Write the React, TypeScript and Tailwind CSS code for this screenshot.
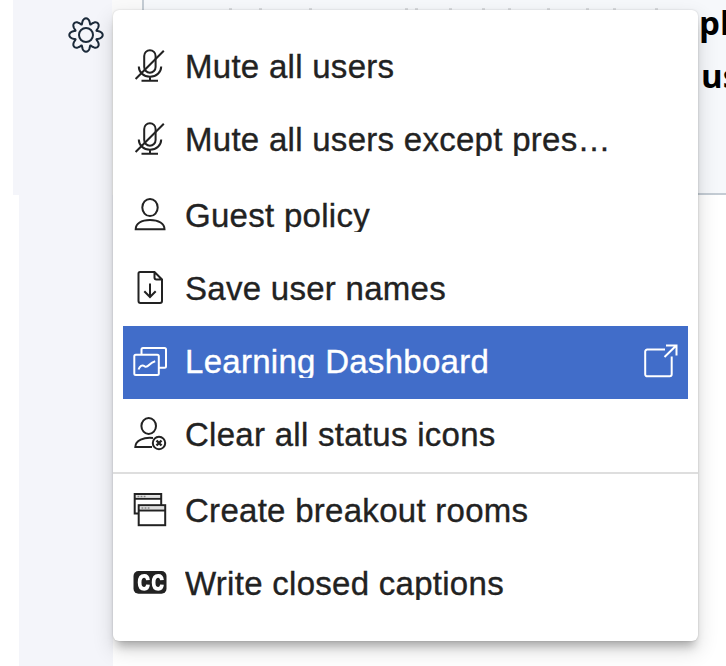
import type { ReactNode } from "react";

const Icon = ({ children, dy = 0 }: { children: ReactNode; dy?: number }) => (
  <svg
    width="60"
    height="60"
    viewBox={`0 ${-dy} 60 60`}
    fill="none"
    stroke="currentColor"
    strokeWidth="2"
    className="-mx-[13px] shrink-0"
  >
    {children}
  </svg>
);

const MutedMic = () => (
  <Icon dy={3.5}>
    <rect x="24.2" y="9.7" width="11.4" height="22.5" rx="5.7" />
    <path d="M18.8 26c0 5.6 4.7 10.2 11.2 10.2S41.2 31.6 41.2 26M30 36.2v4M21.5 40.3h16.5M15.600 38.500L43.800 10.200" />
  </Icon>
);

const Person = () => (
  <Icon dy={-0.5}>
    <ellipse cx="30" cy="22" rx="7.7" ry="8.6" />
    <path d="M15.700 43.700c0-5.500 5.500-9.300 14.300-9.300s14.500 3.800 14.500 9.300z" />
  </Icon>
);

const SaveFile = () => (
  <Icon dy={1.5}>
    <path d="M20 11.500h14.500l7.500 7.500v21.500a2 2 0 0 1-2 2H20.500a2 2 0 0 1-2-2V13a1.500 1.500 0 0 1 1.500-1.500zM34.500 11.500v5.500a2 2 0 0 0 2 2H42M30 23v13.500M24.300 30.700l5.700 5.800 5.700-5.800" />
  </Icon>
);

const Dashboard = () => (
  <Icon dy={-1}>
    <rect x="14.300" y="23.700" width="24.500" height="20.300" rx="1.500" />
    <path d="M21.500 23.700V18.500a1.500 1.500 0 0 1 1.500-1.500h21.500a1.500 1.500 0 0 1 1.500 1.500v16.800a1.500 1.500 0 0 1-1.500 1.500h-5.700M18.500 38.500c1.200-3.700 3.600-5.200 6.200-3.200 3.500 2.200 4-3.300 10.500-5" />
  </Icon>
);

const ClearStatus = () => (
  <Icon dy={0.5}>
    <ellipse cx="28.700" cy="20.500" rx="7.300" ry="8" />
    <path d="M33 32.500c-9-.9-17.700 2-17.700 9H32" />
    <circle cx="39" cy="37.500" r="6.200" />
    <path strokeWidth="2.400" d="M36.500 35l5 5M41.500 35l-5 5" />
  </Icon>
);

const Rooms = () => (
  <Icon dy={-0.5}>
    <path d="M18.700 33h-4V13.500h26.500v11M15 18.300h26" />
    <path stroke="#dedede" strokeWidth="2.400" d="M16 15.900h24M20 27.400h24" />
    <path stroke="#888" strokeWidth="1.700" strokeDasharray="1.800 1.300" d="M17.500 16h8M21.500 27.500h8" />
    <rect x="18.700" y="24.700" width="26.500" height="20" />
    <path d="M19 30h26" />
  </Icon>
);

const Captions = () => (
  <Icon dy={1.5}>
    <rect x="13.500" y="15.500" width="33" height="22.700" rx="5" fill="currentColor" stroke="none" />
    <path
      stroke="#fff"
      strokeWidth="3.700"
      d="M28 24.600c-.3-2.800-1.600-4.200-3.700-4.200-2.900 0-4.700 2.400-4.700 6.500s1.800 6.500 4.700 6.500c2.200 0 3.500-1.400 3.700-4.200M42 24.600c-.3-2.800-1.600-4.200-3.700-4.200-2.900 0-4.700 2.400-4.700 6.500s1.800 6.500 4.700 6.500c2.200 0 3.500-1.400 3.700-4.200"
    />
  </Icon>
);

// Outline with eight rounded teeth, the first one pointing right.
const gearOutline = Array.from({ length: 160 }, (_, i) => {
  const step = (i / 160) * Math.PI * 2;
  const angle = step + 0.055 * Math.sin(8 * step);
  const radius = 14 + 2.7 * Math.cos(8 * step);
  return `${(19 + radius * Math.cos(angle)).toFixed(2)},${(19 + radius * Math.sin(angle)).toFixed(2)}`;
}).join(" ");

const Gear = () => (
  <svg width="38" height="38" viewBox="0 0 38 38" fill="none" stroke="#1b2a3a" strokeWidth="2" strokeLinejoin="round">
    <circle cx="19" cy="19" r="7" />
    <polygon points={gearOutline} />
  </svg>
);

const External = () => (
  <svg width="36" height="36" viewBox="0 0 36 36" fill="none" stroke="currentColor" strokeWidth="2">
    <path d="M22 5.600H4.200a2 2 0 0 0-2 2v22.700a2 2 0 0 0 2 2h22.500a2 2 0 0 0 2-2V12.500M21.500 13L33 1.700M23 1.500h10.500v10" />
  </svg>
);

type ItemProps = { icon: ReactNode; label: string; selected?: boolean };

const Item = ({ icon, label, selected }: ItemProps) => (
  <li
    className={
      selected
        ? "flex h-[73px] items-center bg-[#416dc9] pl-[10px] pr-[9px] pb-0.5 text-white"
        : "flex h-[73px] items-center pl-[10px] pr-[9px] pb-0.5"
    }
  >
    {icon}
    <span className="ml-[18px] flex-1 overflow-hidden whitespace-nowrap text-[33px] leading-[33px] tracking-[0.28px] [-webkit-text-stroke:0.35px_currentColor]">
      {label}
    </span>
    {selected && <External />}
  </li>
);

const ticks = [229, 259, 309, 405, 415, 449, 482, 508, 547, 586, 613, 655];

export default function App() {
  return (
    <div className="relative h-[666px] w-[726px] overflow-hidden bg-white font-['Liberation_Sans',Arial,sans-serif] text-[#222]">
      <div className="flex h-[195px]">
        <aside className="ml-[13px] w-[99px] bg-[#f4f5fa] pl-[54px] pt-4">
          <Gear />
        </aside>
        <div className="w-[30px] bg-[#fafafa]" />
        <main className="flex-1 overflow-hidden border-b-2 border-l-2 border-[#c4ccd4] bg-[#f6f8fb] pl-[555px] font-['Open_Sans','Noto_Sans',sans-serif] text-[33px] font-bold leading-[53px] text-black">
          <p className="-mt-[4px] whitespace-nowrap">pl</p>
          <p className="whitespace-nowrap pl-[2px]">us</p>
        </main>
      </div>
      <div className="ml-[19px] h-[471px] w-[94px] bg-[#f4f5fa]" />
      {ticks.map((x) => (
        <i key={x} className="absolute top-2 h-[2px] w-[3px] bg-[#d9dbde]" style={{ left: x }} />
      ))}
      <ul className="absolute left-[113px] top-[10px] flex h-[631px] w-[585px] flex-col rounded-[6px] bg-white px-[10px] pt-[21px] shadow-[0_9px_10px_-4px_rgba(0,0,0,0.26),0_9px_20px_2px_rgba(0,0,0,0.12),0_0_2px_rgba(0,0,0,0.18)]">
        <Item icon={<MutedMic />} label="Mute all users" />
        <Item icon={<MutedMic />} label="Mute all users except pres…" />
        <li className="h-[3px]" />
        <Item icon={<Person />} label="Guest policy" />
        <Item icon={<SaveFile />} label="Save user names" />
        <Item icon={<Dashboard />} label="Learning Dashboard" selected />
        <Item icon={<ClearStatus />} label="Clear all status icons" />
        <li className="-mx-[10px] mb-px h-[2px] bg-[#dedede]" />
        <Item icon={<Rooms />} label="Create breakout rooms" />
        <Item icon={<Captions />} label="Write closed captions" />
      </ul>
    </div>
  );
}
